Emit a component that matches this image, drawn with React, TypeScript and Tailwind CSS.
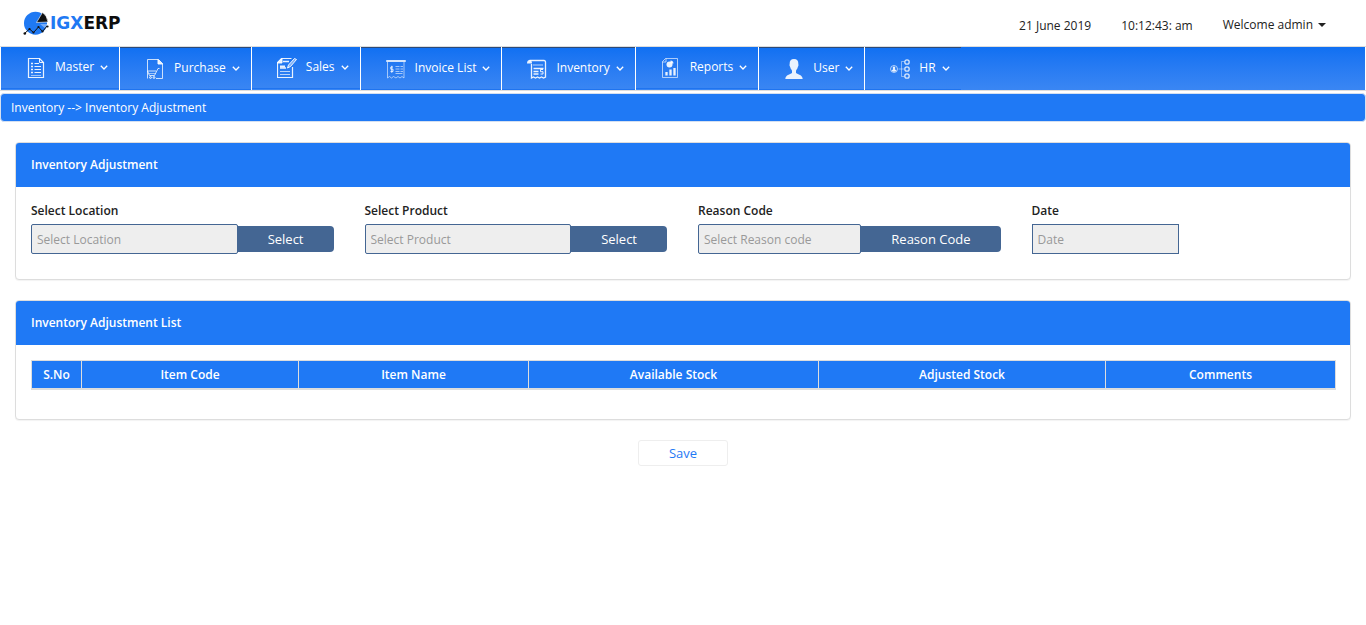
import type { ReactNode } from 'react';

const stroke = {
  fill: 'none',
  stroke: 'currentColor',
  strokeWidth: 1,
} as const;

function Icon({ children }: { children: ReactNode }) {
  return (
    <svg viewBox="0 0 20 20" className="size-5 shrink-0 text-white/90" aria-hidden="true" {...stroke}>
      {children}
    </svg>
  );
}

const MasterIcon = () => (
  <Icon>
    <path d="M2.5.5h11l4 4v15h-15z" strokeWidth="1.2" />
    <path d="M13.5.5v4h4" />
    <path d="M5 5.5h2M5 8.5h2M5 11.5h2M5 14.5h2" strokeWidth="1.6" />
    <path d="M8.5 5.5H13M8.5 8.5H15M8.5 11.5H15M8.5 14.5H15" />
    <path d="M5 17.5h10" opacity=".6" />
  </Icon>
);

const PurchaseIcon = () => (
  <Icon>
    <path d="M2.500 19.500V.5h11l4 4v15H11" opacity=".85" />
    <path d="M13 .5V5h4.500z" fill="currentColor" />
    <path d="M14.500 9.500h-1.500l-3.500 7h-5l-2-4.500h8.500" opacity=".85" />
    <path d="M4 14.500h6.500" opacity=".6" />
    <circle cx="5.500" cy="18.500" r=".9" />
    <circle cx="9" cy="18.500" r=".9" />
  </Icon>
);

const SalesIcon = () => (
  <Icon>
    <path d="M15.500 9v10.500h-15V4.500l4-4h10" strokeWidth="1.200" />
    <path d="M.5 5h4.500V.5z" fill="currentColor" />
    <path d="M19.500 1.500l-2-1-6 6.500-1 3 3-1.500z" fill="currentColor" fillOpacity=".45" />
    <path d="M6 3.500h6M3 10h6" strokeWidth="1.300" />
    <path d="M3 8.500h5" strokeWidth="2" />
    <path d="M3 13.500h10M3 16.500h10" opacity=".75" />
  </Icon>
);

const InvoiceIcon = () => (
  <Icon>
    <g opacity=".9">
      <path d="M.5 2.500v-1h19v1z" />
      <path d="M1.500 3v16l2-1.500 2 1.500 2-1.500 2.500 1.500 2-1.500 2 1.500 2-1.500 2 1.500V3" opacity=".7" />
      <path d="M7 8H4.800v2.200H7v2.300H4.500M5.750 6.800v7" />
      <path d="M9.500 7.500h4M9.500 10h4M9.500 12.500h4M9.500 14.500h7M14.500 7.500H17M14.500 10H17M14.500 12.500H17" opacity=".7" />
    </g>
  </Icon>
);

const InventoryIcon = () => (
  <Icon>
    <path d="M4.500 5v14l2-1 2 1 2-1 2 1 2-1 2 1 2-1V3q0-1.500-1.500-1.500H2.500" strokeWidth="1.300" />
    <path d="M0 4.500Q0 1 2.500 1T5 4.500z" fill="currentColor" stroke="none" />
    <path d="M6.500 6h10" strokeDasharray="1 1" strokeWidth="1.500" />
    <path d="M6.500 9.500h10M6.500 12.500h5M6.500 15h5" strokeWidth="1.300" />
    <path d="M16 10.500h-2.500v2.200H16V15h-2.500" />
  </Icon>
);

const ReportsIcon = () => (
  <Icon>
    <path d="M4.500.500h12v19h-15V3.500z" opacity=".7" />
    <path d="M1.500 4h3.500V.5" opacity=".7" />
    <circle cx="8.500" cy="6.500" r="3" fill="currentColor" stroke="none" />
    <path d="M9.500 5.500V2.500q2.800.2 3 3z" fill="currentColor" stroke="none" />
    <path d="M5.500 17.500V14M9.500 17.500v-6M13.500 17.500V10" strokeWidth="2.300" />
  </Icon>
);

const UserIcon = () => (
  <Icon>
    <path
      d="M10 0C7 0 5.500 2 5.700 4.500c0 1-.5 1.500 0 2.500.4.700.6 1.200.8 2 .4 1.300 1.500 2 1.500 3v2c-2 1.500-6.300 1.600-6.700 6h17.400c-.4-4.400-4.700-4.500-6.700-6v-2c0-1 1.100-1.700 1.500-3 .2-.8.4-1.300.8-2 .5-1 0-1.500 0-2.500C14.500 2 13 0 10 0z"
      fill="currentColor"
      stroke="none"
    />
  </Icon>
);

const HrIcon = () => (
  <Icon>
    <circle cx="4" cy="10" r="3.500" opacity=".7" />
    <path d="M4 7.500a1.300 1.400 0 0 1 .8 2.500l1.700 1.700q-2.500 2-5 0L3.200 10A1.300 1.400 0 0 1 4 7.500z" fill="currentColor" stroke="none" />
    <path d="M8.500 10H14M14.500 2.500h-3v15h3" opacity=".5" />
    <g strokeWidth="1.300" opacity=".9">
      <circle cx="17" cy="3" r="2.200" />
      <circle cx="17" cy="10" r="2.200" />
      <circle cx="17" cy="17" r="2.200" />
    </g>
  </Icon>
);

type NavEntry = { label: string; icon: ReactNode; ruled?: boolean };

const navEntries: NavEntry[] = [
  { label: 'Master', icon: <MasterIcon /> },
  { label: 'Purchase', icon: <PurchaseIcon />, ruled: true },
  { label: 'Sales', icon: <SalesIcon /> },
  { label: 'Invoice List', icon: <InvoiceIcon />, ruled: true },
  { label: 'Inventory', icon: <InventoryIcon />, ruled: true },
  { label: 'Reports', icon: <ReportsIcon /> },
  { label: 'User', icon: <UserIcon />, ruled: true },
  { label: 'HR', icon: <HrIcon />, ruled: true },
];

function Logo() {
  return (
    <a href="#" className="flex items-center" aria-label="IGXERP">
      <svg viewBox="0 0 27 25" className="h-[25px] w-[27px]" aria-hidden="true">
        <circle cx="12.500" cy="12.200" r="11.500" fill="#1f79f3" />
        <path d="M13.500 11.500L19.500 1.500q4.500 3 5.500 9.500z" fill="#111" stroke="#fff" strokeWidth=".6" />
        <path d="M17 13h9v4.500l-3 .5z" fill="#fff" opacity=".4" />
        <path d="M1.500 22.500l5-4.500 4 3.500 5-5.500 4 4.500 4.500-5.500" fill="none" stroke="#111" strokeWidth="1" />
        <g fill="#111">
          <circle cx="1.800" cy="22.500" r="1.300" />
          <circle cx="6.500" cy="18" r="1.100" />
          <circle cx="10.500" cy="21.500" r="1.100" />
          <circle cx="15.500" cy="16" r="1.100" />
          <circle cx="19.500" cy="20.500" r="1.100" />
          <circle cx="24.500" cy="15.500" r="1.100" />
        </g>
      </svg>
      <span className="font-['DejaVu_Sans',sans-serif] text-[17px] leading-5 font-bold text-[#0d0d0d]">
        <span className="text-[#1f79f3]">IGX</span>ERP
      </span>
    </a>
  );
}

function NavItem({ label, icon, ruled }: NavEntry) {
  return (
    <li className="flex border-r border-white last:border-r-0">
      <button
        type="button"
        className={
          ruled
            ? 'flex h-[43px] items-center border-t border-b border-t-[#2c4a78] border-b-[#1f74f0] pr-[11px] pl-[25px]'
            : 'flex h-[42px] items-center border-b border-b-[#1f74f0] pr-[11px] pl-[25px]'
        }
      >
        {icon}
        <span className="ml-[9px] pb-[2px] text-[12px] leading-5 text-white">{label}</span>
        <svg viewBox="0 0 8 5" className="ml-[6px] h-[5px] w-2" aria-hidden="true">
          <path d="M.8.800L4 4 7.200.800" fill="none" stroke="#fff" strokeWidth="1.300" />
        </svg>
      </button>
    </li>
  );
}

function Panel({ title, children }: { title: string; children: ReactNode }) {
  return (
    <section className="rounded border border-[#ddd] bg-white shadow-[0_1px_1px_rgba(0,0,0,0.05)]">
      <h2 className="rounded-t-[3px] bg-[#1f79f5] px-[15px] py-3 text-[12px] leading-5 font-semibold text-white">{title}</h2>
      {children}
    </section>
  );
}

type FieldProps = { id: string; label: string; placeholder: string; action?: string };

function Field({ id, label, placeholder, action }: FieldProps) {
  return (
    <div className="pr-4 pl-[15px]">
      <label htmlFor={id} className="block text-[12px] leading-[18px] font-semibold text-[#222]">
        {label}
      </label>
      <div className="mt-1 flex items-center">
        <input
          id={id}
          type="text"
          readOnly
          placeholder={placeholder}
          className={
            action
              ? 'h-[30px] min-w-0 flex-1 rounded-[2px] border border-[#446693] bg-[#eee] px-[5px] text-[12px] text-[#555] placeholder:text-[#999]'
              : 'h-[30px] w-[147px] border border-[#446693] bg-[#eee] px-[5px] text-[12px] text-[#555] placeholder:text-[#999]'
          }
        />
        {action && (
          <button type="button" className="h-[26px] rounded-r-[4px] bg-[#446693] px-[30px] text-[13px] leading-5 text-white">
            {action}
          </button>
        )}
      </div>
    </div>
  );
}

const columns = ['S.No', 'Item Code', 'Item Name', 'Available Stock', 'Adjusted Stock', 'Comments'];

export default function App() {
  return (
    <div className="bg-white font-['Open_Sans',sans-serif] text-[#222]">
      <header className="flex h-[46px] items-center justify-between pr-10 pl-[23px]">
        <Logo />
        <div className="flex items-center gap-[30px] pt-[6px] text-[12px] leading-5">
          <span>21 June 2019</span>
          <span>10:12:43: am</span>
          <button type="button" className="flex items-center pb-[2px]">
            Welcome admin
            <svg viewBox="0 0 8 4" className="ml-[5px] h-1 w-2" aria-hidden="true">
              <path d="M0 0h8L4 4z" fill="#222" />
            </svg>
          </button>
        </div>
      </header>

      <nav className="border-y border-[#ddd] px-px">
        <ul className="flex h-[43px] bg-linear-to-b from-[#0f70f2] to-[#3a86f3]">
          {navEntries.map((entry) => (
            <NavItem key={entry.label} {...entry} />
          ))}
        </ul>
      </nav>

      <div className="mt-[2px] rounded border border-[#d5e0f0] bg-[#1f79f5] px-[10px] pt-1 pb-[3px] text-[12px] leading-5 text-white">
        Inventory --&gt; Inventory Adjustment
      </div>

      <main className="flex flex-col gap-5 px-[15px] pt-5">
        <Panel title="Inventory Adjustment">
          <form className="grid grid-cols-4 pt-[15px] pb-[25px]">
            <Field id="location" label="Select Location" placeholder="Select Location" action="Select" />
            <Field id="product" label="Select Product" placeholder="Select Product" action="Select" />
            <Field id="reason" label="Reason Code" placeholder="Select Reason code" action="Reason Code" />
            <Field id="date" label="Date" placeholder="Date" />
          </form>
        </Panel>

        <Panel title="Inventory Adjustment List">
          <div className="px-[15px] pt-[15px] pb-[29px]">
            <table className="w-full table-fixed border-collapse border border-[#ddd]">
              <colgroup>
                <col className="w-[50px]" />
                <col className="w-[217px]" />
                <col className="w-[230px]" />
                <col className="w-[290px]" />
                <col className="w-[287px]" />
                <col className="w-[230px]" />
              </colgroup>
              <thead>
                <tr>
                  {columns.map((name) => (
                    <th
                      key={name}
                      scope="col"
                      className="h-7 border border-b-2 border-[#ddd] bg-[#1f79f5] px-0 pt-[2px] pb-0 text-center text-[12px] leading-5 font-semibold text-white"
                    >
                      {name}
                    </th>
                  ))}
                </tr>
              </thead>
            </table>
          </div>
        </Panel>

        <button
          type="button"
          className="h-[26px] w-[90px] self-center rounded-[3px] border border-[#eee] bg-white text-[13px] leading-5 text-[#1f79f5]"
        >
          Save
        </button>
      </main>
    </div>
  );
}
